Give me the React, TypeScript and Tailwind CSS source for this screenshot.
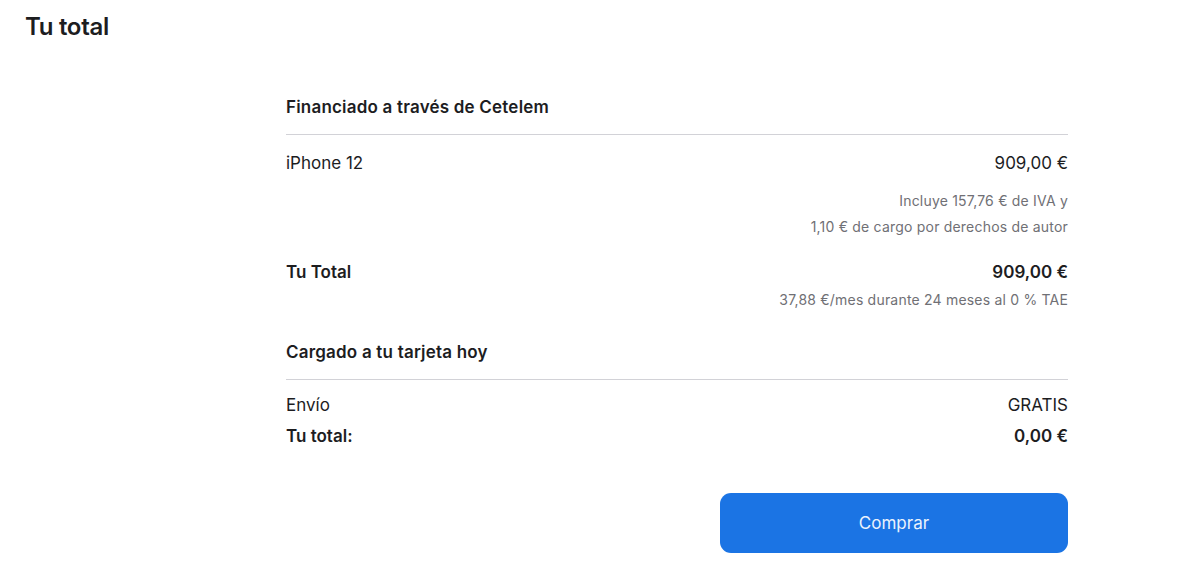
export default function App() {
  return (
    <div className="min-h-[561px] bg-white text-[#1d1d1f]" style={{ fontFamily: 'Inter, "Noto Sans", sans-serif' }}>
      <div className="px-[25px] pt-[12px]">
        <h1 className="text-[24px] font-semibold leading-[30px] tracking-[-0.3px]">Tu total</h1>
      </div>

      <div className="ml-[286px] w-[782px] pt-[53px]">
        <div className="pb-[15px] border-b border-[#d2d2d7]">
          <h2 className="text-[17px] leading-[24px] font-semibold tracking-[0.2px]">Financiado a través de Cetelem</h2>
        </div>

        <div className="flex justify-between items-center pt-[16px] text-[17px] leading-[24px]">
          <span>iPhone 12</span>
          <span>909,00 €</span>
        </div>
        <div className="mt-[13px] flex flex-col items-end text-[14px] leading-[26px] tracking-[0.2px] text-[#707075]">
          <span>Incluye 157,76 € de IVA y</span>
          <span>1,10 € de cargo por derechos de autor</span>
        </div>

        <div className="mt-[20px] flex justify-between items-center text-[17px] leading-[24px] font-semibold">
          <span>Tu Total</span>
          <span>909,00 €</span>
        </div>
        <div className="mt-[4px] flex justify-end text-[14px] leading-[24px] tracking-[0.2px] text-[#707075]">
          <span>37,88 €/mes durante 24 meses al 0 % TAE</span>
        </div>

        <div className="mt-[28px] pb-[15px] border-b border-[#d2d2d7]">
          <h2 className="text-[17px] leading-[24px] font-semibold tracking-[0.2px]">Cargado a tu tarjeta hoy</h2>
        </div>

        <div className="pt-[13px] flex justify-between items-center text-[17px] leading-[24px]">
          <span>Envío</span>
          <span>GRATIS</span>
        </div>
        <div className="mt-[7px] flex justify-between items-center text-[17px] leading-[24px] font-semibold">
          <span>Tu total:</span>
          <span>0,00 €</span>
        </div>

        <div className="mt-[45px] flex justify-end">
          <button className="w-[348px] h-[60px] pt-[2px] rounded-[11px] bg-[#1b74e4] text-[17px] text-[#eaf2fd]">
            Comprar
          </button>
        </div>
      </div>
    </div>
  )
}
